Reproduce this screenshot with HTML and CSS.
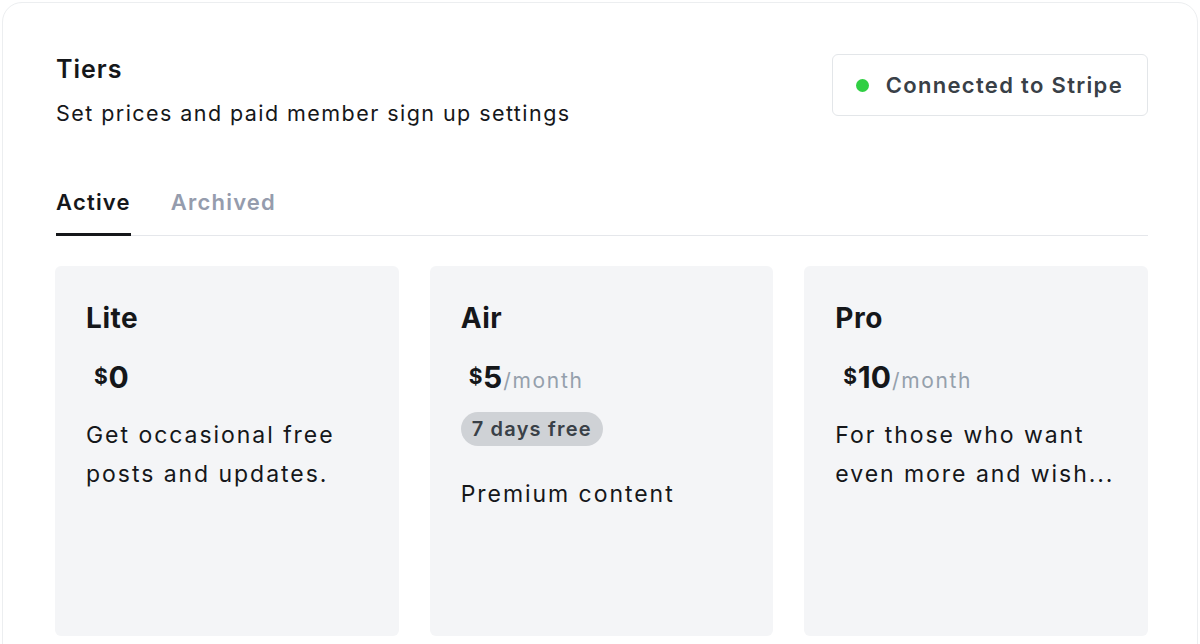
FILE: index.html
```html
<!DOCTYPE html>
<html lang="en">
<head>
<meta charset="utf-8">
<title>Tiers</title>
<link rel="stylesheet" href="styles.css">
</head>
<body>
<section class="panel">
  <header class="panel-header">
    <div class="heading">
      <h2 class="title">Tiers</h2>
      <p class="subtitle">Set prices and paid member sign up settings</p>
    </div>
    <button class="stripe-btn" type="button"><span class="dot"></span>Connected to Stripe</button>
  </header>

  <nav class="tabs">
    <span class="tab active">Active</span>
    <span class="tab">Archived</span>
  </nav>

  <div class="tiers">
    <article class="tier">
      <h3 class="tier-name">Lite</h3>
      <div class="price"><span class="currency">$</span><span class="amount">0</span></div>
      <p class="desc">Get occasional free posts and updates.</p>
    </article>
    <article class="tier">
      <h3 class="tier-name">Air</h3>
      <div class="price"><span class="currency">$</span><span class="amount">5</span><span class="period">/month</span></div>
      <span class="trial">7 days free</span>
      <p class="desc">Premium content</p>
    </article>
    <article class="tier">
      <h3 class="tier-name">Pro</h3>
      <div class="price"><span class="currency">$</span><span class="amount">10</span><span class="period">/month</span></div>
      <p class="desc">For those who want even more and wish...</p>
    </article>
  </div>
</section>
</body>
</html>
```

FILE: styles.css
```css
* { box-sizing: border-box; }

html, body {
  margin: 0;
  padding: 0;
  background: #ffffff;
  height: 644px;
  overflow: hidden;
}

body {
  font-family: Inter, "Noto Sans", "Liberation Sans", sans-serif;
  color: #15171a;
  padding: 2px 2px 0 2px;
  letter-spacing: 0.06em;
}

.panel {
  border: 1px solid #eceef0;
  border-radius: 20px;
  background: #fff;
  padding: 49px 49px 60px 52px;
  min-height: 700px;
}

.panel-header {
  display: flex;
  justify-content: space-between;
  align-items: flex-start;
}

.heading {
  padding-left: 1px;
}

.title {
  margin: 0;
  font-size: 25px;
  line-height: 34px;
  font-weight: 600;
  letter-spacing: 0.04em;
}

.subtitle {
  margin: 12px 0 0;
  font-size: 21.5px;
  line-height: 30px;
  color: #15171a;
  letter-spacing: 0.067em;
}

.stripe-btn {
  display: flex;
  align-items: center;
  gap: 17px;
  margin-top: 2px;
  height: 62px;
  padding: 0 24px 0 23px;
  border: 1px solid #e3e6e9;
  border-radius: 6px;
  background: #fff;
  font-family: inherit;
  font-size: 22px;
  font-weight: 600;
  color: #394047;
  letter-spacing: 0.06em;
}

.dot {
  width: 13px;
  height: 13px;
  border-radius: 50%;
  background: #30cf43;
}

.tabs {
  display: flex;
  gap: 40px;
  margin-top: 59px;
  margin-left: 1px;
  border-bottom: 1px solid #e5e7eb;
}

.tab {
  font-size: 22px;
  line-height: 30px;
  font-weight: 600;
  color: #959cad;
  padding-bottom: 16px;
  margin-bottom: -1px;
  border-bottom: 3px solid transparent;
  letter-spacing: 0.055em;
}

.tab.active {
  color: #15171a;
  border-bottom-color: #15171a;
}

.tiers {
  display: grid;
  grid-template-columns: repeat(3, 1fr);
  gap: 31px;
  margin-top: 30px;
}

.tier {
  background: #f4f5f7;
  border-radius: 6px;
  padding: 34px 30px 40px 31px;
  min-height: 370px;
  display: flex;
  flex-direction: column;
  align-items: flex-start;
}

.tier-name {
  margin: 0;
  font-size: 28px;
  line-height: 36px;
  font-weight: 700;
  letter-spacing: 0.02em;
}

.price {
  margin-top: 23px;
  padding-left: 8px;
  display: flex;
  align-items: baseline;
  line-height: 36px;
}

.currency {
  font-size: 21px;
  font-weight: 700;
  position: relative;
  top: -4px;
  letter-spacing: 0.03em;
}

.amount {
  font-size: 30px;
  font-weight: 700;
  letter-spacing: 0;
}

.period {
  font-size: 21px;
  color: #95a0ac;
  margin-left: 1px;
  letter-spacing: 0.08em;
}

.trial {
  margin-top: 13px;
  margin-bottom: 12px;
  padding: 0 11px;
  height: 34px;
  line-height: 34px;
  border-radius: 17px;
  background: #cfd2d6;
  color: #394047;
  font-size: 20px;
  font-weight: 600;
  letter-spacing: 0.06em;
}

.desc {
  margin: 17px 0 0;
  font-size: 23px;
  line-height: 39px;
  color: #15171a;
  letter-spacing: 0.085em;
}
```
